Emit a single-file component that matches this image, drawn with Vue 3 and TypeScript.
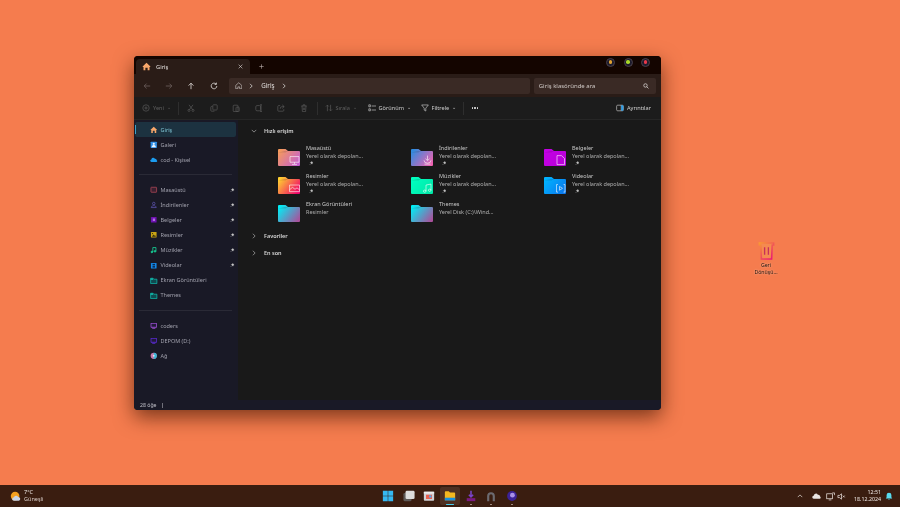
<script setup lang="ts">
const quick = [
  { name: 'Masaüstü', sub: 'Yerel olarak depolan...', pin: true, from: '#f59a5c', to: '#c55fd0', glyph: 'M9 7.5h9v6H9z M13.5 13.5v2 M11 15.8h5' },
  { name: 'İndirilenler', sub: 'Yerel olarak depolan...', pin: true, from: '#2f8ce0', to: '#ef62b0', glyph: 'M13.5 6.5v5 M11.5 9.8l2 2 2-2 M10 11.5a3.5 3 0 1 0 7 0 M10.5 15.5h6' },
  { name: 'Belgeler', sub: 'Yerel olarak depolan...', pin: true, from: '#c400e6', to: '#b800d8', glyph: 'M10 6.5h4.5l3 3v6.5H10z' },
  { name: 'Resimler', sub: 'Yerel olarak depolan...', pin: true, from: '#ffd030', to: '#f0006a', glyph: 'M8.5 8h10v7h-10z M8.5 13l3-2.5 2.5 2 2-1.5 2.5 2' },
  { name: 'Müzikler', sub: 'Yerel olarak depolan...', pin: true, from: '#00ffc0', to: '#00e8a8', glyph: 'M12 8v6.5 M17 7v6.5 M12 8l5-1 M12 14.5a1.3 1.2 0 1 1-2.6 0a1.3 1.2 0 1 1 2.6 0 M17 13.5a1.3 1.2 0 1 1-2.6 0a1.3 1.2 0 1 1 2.6 0' },
  { name: 'Videolar', sub: 'Yerel olarak depolan...', pin: true, from: '#00b4ff', to: '#0a78ee', glyph: 'M11 7.5H9.5v8H11 M16.5 7.5H18v8h-1.5 M12.5 9.5l3 2-3 2z' },
  { name: 'Ekran Görüntüleri', sub: 'Resimler', pin: false, from: '#00eef5', to: '#a9519c', glyph: '' },
  { name: 'Themes', sub: 'Yerel Disk (C:)\\Wind...', pin: false, from: '#00eef5', to: '#a9519c', glyph: '' },
];

const pinned = [
  { name: 'Masaüstü', color: '#b34a5a', shape: 'box' },
  { name: 'İndirilenler', color: '#6a5fc8', shape: 'user' },
  { name: 'Belgeler', color: '#6d12b0', shape: 'doc' },
  { name: 'Resimler', color: '#c9a414', shape: 'pic' },
  { name: 'Müzikler', color: '#18d49a', shape: 'music' },
  { name: 'Videolar', color: '#1488e8', shape: 'film' },
];

const drives = [
  { name: 'coders', color: '#a050d8', round: false },
  { name: 'DEPOM (D:)', color: '#5c2bd8', round: false },
  { name: 'Ağ', color: '#c878a8', round: true },
];

const pinPath = 'M3.6.5 5.5 2.4 4.6 2.8 3.9 4.2 1.8 2.1 3.2 1.4zM2.4 3.6.6 5.4';
</script>

<template>
  <div class="desktop">
    <div class="window">
      <div class="tabstrip">
        <div class="tab">
          <svg class="tab-home" viewBox="0 0 12 12"><path d="M6 1 11.5 6.2 10 6.5V11H7.5V7.5h-3V11H2V6.5L.5 6.2z" fill="#f6a66a" /></svg>
          <span>Giriş</span>
          <svg class="tab-x" viewBox="0 0 8 8"><path d="M1 1l6 6M7 1 1 7" stroke="#d8d2d0" stroke-width="1" /></svg>
        </div>
        <svg class="tab-plus" viewBox="0 0 8 8"><path d="M4 .5v7M.5 4h7" stroke="#b8aeaa" stroke-width="1" /></svg>
        <div class="win-controls">
          <span class="ctl"><i style="background:#e0a030"></i></span>
          <span class="ctl"><i style="background:#a8d828"></i></span>
          <span class="ctl"><i style="background:#e83848"></i></span>
        </div>
      </div>

      <div class="navbar">
        <svg class="nav-ic dim" viewBox="0 0 10 10"><path d="M9 5H1.5M4.5 2 1.5 5l3 3" /></svg>
        <svg class="nav-ic dim" viewBox="0 0 10 10"><path d="M1 5h7.5M5.5 2l3 3-3 3" /></svg>
        <svg class="nav-ic" viewBox="0 0 10 10"><path d="M5 9V1.5M2 4.500l3-3 3 3" /></svg>
        <svg class="nav-ic" viewBox="0 0 10 10"><path d="M8.5 5A3.5 3.5 0 1 1 7.4 2.4M8 .8V3H5.800" /></svg>
        <div class="address">
          <svg class="addr-home" viewBox="0 0 10 10"><path d="M1 4.5 5 1l4 3.500V9H6.2V6.500H3.800V9H1z" /></svg>
          <svg class="addr-chev" viewBox="0 0 4 6"><path d="M1 .8 3.2 3 1 5.200" /></svg>
          <span>Giriş</span>
          <svg class="addr-chev" viewBox="0 0 4 6"><path d="M1 .8 3.2 3 1 5.200" /></svg>
        </div>
        <div class="search">
          <span>Giriş klasöründe ara</span>
          <svg viewBox="0 0 8 8"><circle cx="3.3" cy="3.3" r="2.3" /><path d="M5 5l2.3 2.3" /></svg>
        </div>
      </div>

      <div class="toolbar">
        <div class="tool off">
          <svg class="t-ic" viewBox="0 0 10 10"><circle cx="5" cy="5" r="4" /><path d="M5 3v4M3 5h4" /></svg>
          <span>Yeni</span><em>⌄</em>
        </div>
        <i class="sep"></i>
        <div class="tool-icons">
          <svg class="t-ic" viewBox="0 0 10 10"><circle cx="2.5" cy="8" r="1.3" /><circle cx="7.5" cy="8" r="1.3" /><path d="M3 7 7.5 1M7 7 2.5 1" /></svg>
          <svg class="t-ic" viewBox="0 0 10 10"><rect x="3.5" y="1" width="5.5" height="6.5" rx="1" /><path d="M3 3H2a1 1 0 0 0-1 1v4a1 1 0 0 0 1 1h3.5" /></svg>
          <svg class="t-ic" viewBox="0 0 10 10"><rect x="1.5" y="1.5" width="6" height="8" rx="1" /><rect x="5" y="4" width="4" height="5.5" rx=".6" /></svg>
          <svg class="t-ic" viewBox="0 0 10 10"><rect x="1" y="2" width="6" height="6.5" rx="1.5" /><path d="M7.5 1v8.5M6.2 1h2.600M6.2 9.500h2.600" /></svg>
          <svg class="t-ic" viewBox="0 0 10 10"><path d="M4 2H2a1 1 0 0 0-1 1v5a1 1 0 0 0 1 1h5.5a1 1 0 0 0 1-1V6.500M6.500 1 9 3.300 6.500 5.500M9 3.300H6.500A2.500 2.500 0 0 0 4 6" /></svg>
          <svg class="t-ic" viewBox="0 0 10 10"><path d="M1.5 2.5h7M3.800 2.500V1h2.400v1.500M2.500 2.500 3 9.500h4l.5-7M4.200 4.500v3M5.800 4.500v3" /></svg>
        </div>
        <i class="sep"></i>
        <div class="tool off sort">
          <svg class="t-ic" viewBox="0 0 10 10"><path d="M3 9V1.500M1.200 3.200 3 1.400l1.800 1.800M7 1v7.500M5.200 6.800 7 8.600l1.800-1.800" /></svg>
          <span>Sırala</span><em>⌄</em>
        </div>
        <div class="tool view">
          <svg class="t-ic" viewBox="0 0 10 10"><path d="M4.5 2.5H10M4.500 7.500H10M1 1h2v2.500H1zM1 6h2v2.500H1z" /></svg>
          <span>Görünüm</span><em>⌄</em>
        </div>
        <div class="tool filter">
          <svg class="t-ic" viewBox="0 0 10 10"><path d="M.8 1.200h8.400L6 5.200v3.600l-2-1.200V5.200z" /></svg>
          <span>Filtrele</span><em>⌄</em>
        </div>
        <i class="sep"></i>
        <span class="more"><b></b><b></b><b></b></span>
        <div class="details">
          <svg class="t-ic" viewBox="0 0 10 10"><rect x=".8" y="1.5" width="8.4" height="7" rx="1.3" /><path d="M6.5 1.5v7" /><path d="M6.5 1.5h2a.7.7 0 0 1 .7.7v5.600a.7.7 0 0 1-.7.7h-2z" fill="#2f9fe8" stroke="none" /></svg>
          <span>Ayrıntılar</span>
        </div>
      </div>

      <div class="main">
        <aside class="sidebar">
          <div class="side-row active">
            <svg class="side-ic" viewBox="0 0 12 12"><path d="M6 1 11.5 6.2 10 6.5V11H7.5V7.5h-3V11H2V6.5L.5 6.2z" fill="#f6a66a" /></svg>
            <span>Giriş</span>
          </div>
          <div class="side-row">
            <svg class="side-ic" viewBox="0 0 12 12"><rect x="1" y="1" width="10" height="10" rx="1" fill="#2f8fe8" /><circle cx="6" cy="4.5" r="1.7" fill="#e8f4ff" /><path d="M2.5 10c.5-2.500 2-3.500 3.500-3.500s3 1 3.500 3.500z" fill="#e8f4ff" /></svg>
            <span>Galeri</span>
          </div>
          <div class="side-row">
            <svg class="side-ic" viewBox="0 0 12 12"><path d="M2.5 9.5a2 2 0 0 1-.3-4 3 3 0 0 1 5.600-1.200 2.600 2.600 0 0 1 3 2.400 1.500 1.500 0 0 1-.5 2.800z" fill="#1c9cf0" /></svg>
            <span>cod - Kişisel</span>
          </div>
          <hr class="side-div" />
          <div v-for="item in pinned" :key="item.name" class="side-row">
            <svg class="side-ic" viewBox="0 0 12 12">
              <g v-if="item.shape === 'box'">
                <rect x="1.5" y="2" width="9" height="8" rx=".6" fill="#3a2030" :stroke="item.color" stroke-width="1.2" />
              </g>
              <g v-else-if="item.shape === 'user'" fill="none" :stroke="item.color" stroke-width="1">
                <circle cx="6" cy="4" r="2" /><path d="M2 10.5c.5-2.500 2-3 4-3s3.500.5 4 3z" />
              </g>
              <g v-else-if="item.shape === 'doc'">
                <rect x="1.5" y="1.5" width="9" height="9" rx="1" :fill="item.color" />
                <rect x="4.5" y="4" width="3.5" height="4" fill="#b070e0" />
              </g>
              <g v-else-if="item.shape === 'pic'">
                <rect x="1.5" y="1.5" width="9" height="9" rx="1" :fill="item.color" />
                <path d="M3 9 5.5 5.5 7 7.500l1-1 1.500 2.500z" fill="#3a3010" />
                <circle cx="4" cy="4" r="1" fill="#3a3010" />
              </g>
              <g v-else-if="item.shape === 'film'">
                <rect x="1.5" y="1.5" width="9" height="9" rx="1" :fill="item.color" />
                <rect x="4" y="3" width="4" height="2.5" fill="#0c2a50" />
                <rect x="4" y="6.5" width="4" height="2.5" fill="#0c2a50" />
              </g>
              <g v-else fill="none" :stroke="item.color" stroke-width="1.3">
                <path d="M4.5 9.5V2.500h5v6" /><circle cx="3" cy="9.5" r="1.3" :fill="item.color" /><circle cx="8" cy="8.5" r="1.3" :fill="item.color" />
              </g>
            </svg>
            <span>{{ item.name }}</span>
            <svg class="pin" viewBox="0 0 6 6"><path :d="pinPath" fill="#c8c8c8" stroke="#c8c8c8" stroke-width=".5" /></svg>
          </div>
          <div class="side-row">
            <svg class="side-ic" viewBox="0 0 12 12"><path d="M1 2h4l1 1.500h5v7H1z" fill="#0f4a50" stroke="#10c8b8" stroke-width="1.1" /><path d="M1 2.500h4v2H1z" fill="#10c8b8" /></svg>
            <span>Ekran Görüntüleri</span>
          </div>
          <div class="side-row">
            <svg class="side-ic" viewBox="0 0 12 12"><path d="M1 2h4l1 1.500h5v7H1z" fill="#0f4a50" stroke="#10c8b8" stroke-width="1.1" /><path d="M1 2.500h4v2H1z" fill="#10c8b8" /></svg>
            <span>Themes</span>
          </div>
          <hr class="side-div" />
          <div v-for="d in drives" :key="d.name" class="side-row">
            <svg class="side-ic" viewBox="0 0 12 12">
              <g v-if="d.round">
                <circle cx="6" cy="6" r="5" :fill="d.color" />
                <path d="M6 1a5 5 0 0 1 0 10z" fill="#38b8d8" />
                <circle cx="6" cy="6" r="1.5" fill="#e0e0f0" />
              </g>
              <g v-else>
                <rect x="1" y="1.5" width="10" height="7.5" rx="1" :fill="d.color" />
                <rect x="2.2" y="2.7" width="7.6" height="5" fill="#201a38" />
                <path d="M3.5 10.5h5" :stroke="d.color" stroke-width="1.2" />
              </g>
            </svg>
            <span>{{ d.name }}</span>
          </div>
        </aside>

        <section class="content">
          <div class="group-head open">
            <svg viewBox="0 0 8 8"><path d="M1 2.500 4 5.500l3-3" /></svg>
            <span>Hızlı erişim</span>
          </div>
          <div class="grid">
            <div v-for="(f, i) in quick" :key="f.name" class="entry">
              <svg class="folder" viewBox="0 0 22 18" preserveAspectRatio="none">
                <defs>
                  <linearGradient :id="'folder' + i" x1="0" y1=".2" x2="1" y2=".8">
                    <stop offset="0" :stop-color="f.from" />
                    <stop offset="1" :stop-color="f.to" />
                  </linearGradient>
                </defs>
                <path d="M0 1a1 1 0 0 1 1-1h6.500l2.500 2.200H21a1 1 0 0 1 1 1V17a1 1 0 0 1-1 1H1a1 1 0 0 1-1-1z" :fill="'url(#folder' + i + ')'" />
                <path d="M0 3.600h7.500l2.500-1.400H6.500z" fill="#000" opacity=".12" />
                <path v-if="f.glyph" :d="f.glyph" transform="translate(3 .5)" fill="none" stroke="#fff" stroke-opacity=".75" stroke-width=".8" />
              </svg>
              <div class="entry-text">
                <div class="e-name">{{ f.name }}</div>
                <div class="e-sub">{{ f.sub }}</div>
                <svg v-if="f.pin" class="e-pin" viewBox="0 0 6 6"><path :d="pinPath" fill="#c0c0c0" stroke="#c0c0c0" stroke-width=".5" /></svg>
              </div>
            </div>
          </div>
          <div class="group-head fav">
            <svg viewBox="0 0 8 8"><path d="M2.500 1l3 3-3 3" /></svg>
            <span>Favoriler</span>
          </div>
          <div class="group-head recent">
            <svg viewBox="0 0 8 8"><path d="M2.500 1l3 3-3 3" /></svg>
            <span>En son</span>
          </div>
        </section>
      </div>

      <div class="statusbar"><span>28 öğe</span><i></i></div>
    </div>

    <div class="desk-icon">
      <svg viewBox="0 0 18 20">
        <defs>
          <linearGradient id="bin" gradientUnits="userSpaceOnUse" x1="1" y1="1" x2="17" y2="19">
            <stop offset="0" stop-color="#f9a030" />
            <stop offset="1" stop-color="#e8107a" />
          </linearGradient>
        </defs>
        <path d="M1.500 2h15v2.200H15l-.6 14.800H3.600L3 4.200H1.500z" fill="#f58a50" stroke="url(#bin)" stroke-width="1.700" />
        <path d="M7 6.500v8M11 6.500v8" stroke="#c8305a" stroke-width="1.400" />
      </svg>
      <span>Geri<br />Dönüşü...</span>
    </div>

    <footer class="taskbar">
      <div class="weather">
        <svg viewBox="0 0 14 14"><circle cx="6.500" cy="6.500" r="5.500" fill="#f4a020" /><path d="M5 12.500a2.200 2.200 0 0 1 0-4.400 2.800 2.800 0 0 1 5.300-.5 2.500 2.500 0 0 1 .9 4.900z" fill="#c8d4e8" /></svg>
        <div><div>7°C</div><div class="dim-t">Güneşli</div></div>
      </div>
      <div class="apps">
        <span class="app">
          <svg viewBox="0 0 14 14"><path d="M1 1h5.700v5.700H1zM7.300 1H13v5.700H7.300zM1 7.300h5.700V13H1zM7.300 7.300H13V13H7.300z" fill="#35b8f2" /></svg>
        </span>
        <span class="app">
          <svg viewBox="0 0 14 14"><rect x=".5" y="3.500" width="9.500" height="9.500" rx="1.500" fill="#5e5a58" /><rect x="3" y="1" width="10.500" height="9.500" rx="1.500" fill="#dcdcdc" /></svg>
        </span>
        <span class="app">
          <svg viewBox="0 0 14 14"><rect x="1" y="2" width="12" height="10.500" rx="1" fill="#d0d0d4" /><rect x="1" y="2" width="12" height="2.200" fill="#ececec" /><rect x="3.500" y="5.500" width="7" height="5" fill="#e86050" /><circle cx="8.500" cy="7.500" r="1.500" fill="#58a8e8" /></svg>
        </span>
        <span class="app active">
          <svg viewBox="0 0 14 14"><path d="M1 2.500a1 1 0 0 1 1-1h3.500l1.500 1.500h5a1 1 0 0 1 1 1V12H1z" fill="#f4b820" /><rect x="1" y="9" width="12" height="3.200" fill="#1890e0" /></svg>
          <i class="bar"></i>
        </span>
        <span class="app">
          <svg viewBox="0 0 14 14"><path d="M7 1v7M4.500 5.500 7 8l2.500-2.500" stroke="#7a44c8" stroke-width="1.800" fill="none" /><path d="M2 9.500h10V13H2z" fill="#7a1a80" /></svg>
          <i class="dot"></i>
        </span>
        <span class="app">
          <svg viewBox="0 0 14 14"><path d="M2.500 13V7a4.500 4.500 0 0 1 9 0v6H9V7a2 2 0 0 0-4 0v6z" fill="#6c6a70" /></svg>
          <i class="dot"></i>
        </span>
        <span class="app">
          <svg viewBox="0 0 14 14"><circle cx="7" cy="7" r="5.700" fill="#3c2298" /><circle cx="7.500" cy="6" r="2.800" fill="#a890e8" /></svg>
          <i class="dot"></i>
        </span>
      </div>
      <div class="tray">
        <svg class="tray-chev" viewBox="0 0 8 8"><path d="M1 5.500 4 2.500l3 3" /></svg>
        <svg class="tray-cloud" viewBox="0 0 12 8"><path d="M2.500 7.500a2 2 0 0 1-.3-4 3 3 0 0 1 5.600-1.200 2.600 2.600 0 0 1 3 2.400 1.500 1.500 0 0 1-.5 2.800z" fill="#e8e4e2" /></svg>
        <svg class="tray-ic" viewBox="0 0 10 10"><rect x=".8" y="2" width="6.400" height="5.500" /><path d="M3 8.800h3M7 1h2.500v2.500" /></svg>
        <svg class="tray-ic" viewBox="0 0 10 10"><path d="M1 3.800h1.800L5 2v6L2.800 6.200H1zM6.500 4l2 2M8.500 4l-2 2" /></svg>
        <div class="clock"><div>12:51</div><div>18.12.2024</div></div>
        <svg class="bell" viewBox="0 0 10 10"><path d="M5 .8a3 3 0 0 1 3 3V6.500L9 8H1l1-1.500V3.800a3 3 0 0 1 3-3zM3.800 8.700h2.400L5 9.800z" fill="#58dcf0" /></svg>
      </div>
    </footer>
  </div>
</template>

<style scoped>
.desktop {
  position: relative;
  width: 900px;
  height: 507px;
  overflow: hidden;
  background: #f57c4e;
  font-family: "Noto Sans", "Open Sans", sans-serif;
  color: #e4e0de;
  font-size: 5.5px;
  filter: blur(0.3px);
}

/* the explorer window sits on a free desktop */
.window {
  position: absolute;
  left: 134px;
  top: 56px;
  width: 527px;
  height: 354px;
  display: flex;
  flex-direction: column;
  overflow: hidden;
  border-radius: 4px;
  background: #191919;
  box-shadow: 0 7px 20px rgba(70, 25, 5, 0.7);
}

.tabstrip {
  height: 18px;
  display: flex;
  align-items: flex-end;
  background: #140500;
  padding-left: 2px;
  flex: none;
}
.tab {
  width: 114px;
  height: 15px;
  display: flex;
  align-items: center;
  gap: 5px;
  padding: 0 7px 0 6px;
  box-sizing: border-box;
  border-radius: 4px 4px 0 0;
  background: #2a1c17;
  font-size: 5.8px;
}
.tab-home { width: 9px; height: 9px; }
.tab-x { width: 5px; height: 5px; margin-left: auto; }
.tab-plus { width: 5px; height: 5px; margin: 0 0 5px 9px; }
.win-controls {
  margin-left: auto;
  display: flex;
  gap: 8.5px;
  margin-right: 11px;
  align-self: center;
  margin-top: -6px;
}
.ctl {
  width: 9px;
  height: 9px;
  border-radius: 50%;
  background: #1d1b2c;
  border: 0.5px solid #4a4048;
  box-sizing: border-box;
  display: flex;
  align-items: center;
  justify-content: center;
}
.ctl i { width: 3.5px; height: 3.5px; border-radius: 50%; }

.navbar {
  height: 23px;
  flex: none;
  display: flex;
  align-items: center;
  background: #2a1c17;
  padding-left: 9px;
  box-sizing: border-box;
}
.nav-ic {
  width: 8px;
  height: 8px;
  margin-right: 14.2px;
  fill: none;
  stroke: #e6e2e0;
  stroke-width: 1;
}
.nav-ic.dim { stroke: #6e6260; }
.address {
  width: 301px;
  height: 16px;
  margin-left: -3px;
  border-radius: 2px;
  background: #3a2a25;
  display: flex;
  align-items: center;
  font-size: 6.2px;
  box-sizing: border-box;
  padding-left: 6px;
}
.addr-home { width: 7.5px; height: 7.5px; fill: none; stroke: #d8d4d2; stroke-width: .8; }
.addr-chev { width: 4px; height: 6px; fill: none; stroke: #d8d4d2; stroke-width: .8; margin: 0 8px 0 7px; }
.address span + .addr-chev { margin-left: 8px; }
.search {
  width: 122px;
  height: 16px;
  margin-left: 4px;
  border-radius: 2px;
  background: #3a2a25;
  display: flex;
  align-items: center;
  justify-content: space-between;
  padding: 0 7px 0 5px;
  box-sizing: border-box;
  font-size: 6px;
  color: #cfc8c5;
}
.search svg { width: 6px; height: 6px; fill: none; stroke: #dcd8d6; stroke-width: 1; }

.toolbar {
  height: 23px;
  flex: none;
  display: flex;
  align-items: center;
  background: #1c1c1c;
  border-bottom: 1px solid #262626;
  box-sizing: border-box;
  padding-left: 8px;
}
.t-ic { width: 8px; height: 8px; fill: none; stroke: currentColor; stroke-width: .8; flex: none; }
.tool {
  display: flex;
  align-items: center;
  gap: 3px;
  font-size: 5.6px;
  color: #cccccc;
}
.tool em { font-style: normal; font-size: 5px; line-height: 5px; margin-top: -2px; }
.off { color: #5f5f5f; }
.sep { width: 1px; height: 13px; background: #2e2e2e; }
.tool:first-child { width: 36px; }
.tool-icons {
  display: flex;
  gap: 14.5px;
  color: #5f5f5f;
  padding: 0 9px 0 8px;
}
.sort { margin-left: 7px; width: 37px; }
.view { margin-left: 6px; width: 53px; }
.filter { width: 40px; }
.filter + .sep { margin-left: 2px; }
.more { display: flex; gap: 1px; margin-left: 8px; }
.more b { width: 1.5px; height: 1.5px; border-radius: 50%; background: #e0e0e0; }
.details {
  margin-left: auto;
  margin-right: 10px;
  display: flex;
  align-items: center;
  gap: 3px;
  color: #d0d0d0;
  font-size: 5.6px;
}

.main { flex: 1; display: flex; min-height: 0; }
.sidebar {
  width: 104px;
  flex: none;
  background: #191926;
  padding: 2px 2px 0 1px;
  box-sizing: border-box;
}
.side-row {
  height: 15.1px;
  display: flex;
  align-items: center;
  padding-left: 15px;
  gap: 3px;
  border-radius: 2px;
  color: #a0a0ac;
  font-size: 5.5px;
  box-sizing: border-box;
  position: relative;
}
.side-row.active { background: #1c3240; color: #7cc0d0; }
.side-row.active::before {
  content: "";
  position: absolute;
  left: 0;
  top: 3px;
  bottom: 3px;
  width: 1px;
  background: #3aa0c8;
}
.side-ic { width: 7.5px; height: 7.5px; flex: none; }
.pin { width: 4.5px; height: 4.5px; margin-left: auto; margin-right: 1.5px; }
.side-div { border: 0; border-top: 1px solid #2a2a36; margin: 7px 4px; height: 0; }

.content { flex: 1; background: #191919; min-width: 0; }
.group-head {
  display: flex;
  align-items: center;
  gap: 7px;
  padding-left: 13px;
  font-size: 5.5px;
  font-weight: 600;
  color: #d8d8d8;
  height: 10px;
}
.group-head svg { width: 6px; height: 6px; fill: none; stroke: #c8c8c8; stroke-width: .8; }
.open { margin-top: 6px; }
.grid {
  display: grid;
  grid-template-columns: repeat(3, 133px);
  grid-auto-rows: 28.2px;
  margin: 8px 0 0 40px;
}
.fav { margin-top: 2.4px; }
.recent { margin-top: 7px; }
.entry { display: flex; gap: 6px; }
.folder { width: 22px; height: 17px; flex: none; margin-top: 5px; }
.entry-text { font-size: 5.5px; line-height: 8px; color: #d0d0d0; }
.e-name { color: #c8c8c8; }
.e-sub { color: #b0b0b0; }
.e-pin { width: 4.5px; height: 4.5px; display: block; margin: 1px 0 0 2.5px; }

.statusbar {
  height: 10px;
  flex: none;
  display: flex;
  align-items: center;
  gap: 5px;
  background: #191926;
  padding-left: 6px;
  font-size: 5.2px;
  color: #c0c0c8;
}
.statusbar i { width: 1px; height: 5px; background: #70707a; }

.desk-icon {
  position: absolute;
  left: 750px;
  top: 241px;
  width: 32px;
  text-align: center;
  font-size: 5.2px;
  line-height: 6.5px;
  color: #241208;
  text-shadow: 0 0 2px rgba(255, 255, 255, 0.6);
  display: flex;
  flex-direction: column;
  align-items: center;
}
.desk-icon svg { width: 17px; height: 19px; margin-bottom: 2px; }

.taskbar {
  position: absolute;
  left: 0;
  right: 0;
  bottom: 0;
  height: 22px;
  display: flex;
  align-items: center;
  background: #3a1d10;
  font-size: 5.5px;
  line-height: 7px;
  color: #efe8e4;
}
.weather { display: flex; align-items: center; gap: 3px; padding-left: 10px; width: 100px; box-sizing: border-box; }
.weather svg { width: 11px; height: 11px; }
.dim-t { color: #d8ccc6; }
.apps {
  position: absolute;
  left: 378px;
  top: 0;
  height: 22px;
  display: flex;
  align-items: center;
}
.app {
  width: 20.6px;
  height: 18px;
  display: flex;
  align-items: center;
  justify-content: center;
  position: relative;
  border-radius: 2px;
}
.app svg { width: 12px; height: 12px; }
.app.active { background: #4e3022; }
.bar {
  position: absolute;
  left: 6px;
  right: 6px;
  bottom: 0;
  height: 1.5px;
  border-radius: 1px;
  background: #48d0f0;
}
.dot {
  position: absolute;
  left: 9.5px;
  bottom: 0;
  width: 2px;
  height: 1.5px;
  background: #a08a80;
}
.tray {
  position: absolute;
  right: 7px;
  top: 0;
  height: 22px;
  display: flex;
  align-items: center;
}
.tray-chev { width: 6px; height: 6px; fill: none; stroke: #efe8e4; stroke-width: .9; margin-right: 9px; }
.tray-cloud { width: 9px; height: 6px; margin-right: 5px; }
.tray-ic { width: 9px; height: 9px; fill: none; stroke: #efe8e4; stroke-width: .8; margin-right: 2px; }
.clock { text-align: right; width: 32px; font-size: 5.3px; margin-left: 1px; }
.bell { width: 8px; height: 8px; margin-left: 4px; }
</style>
